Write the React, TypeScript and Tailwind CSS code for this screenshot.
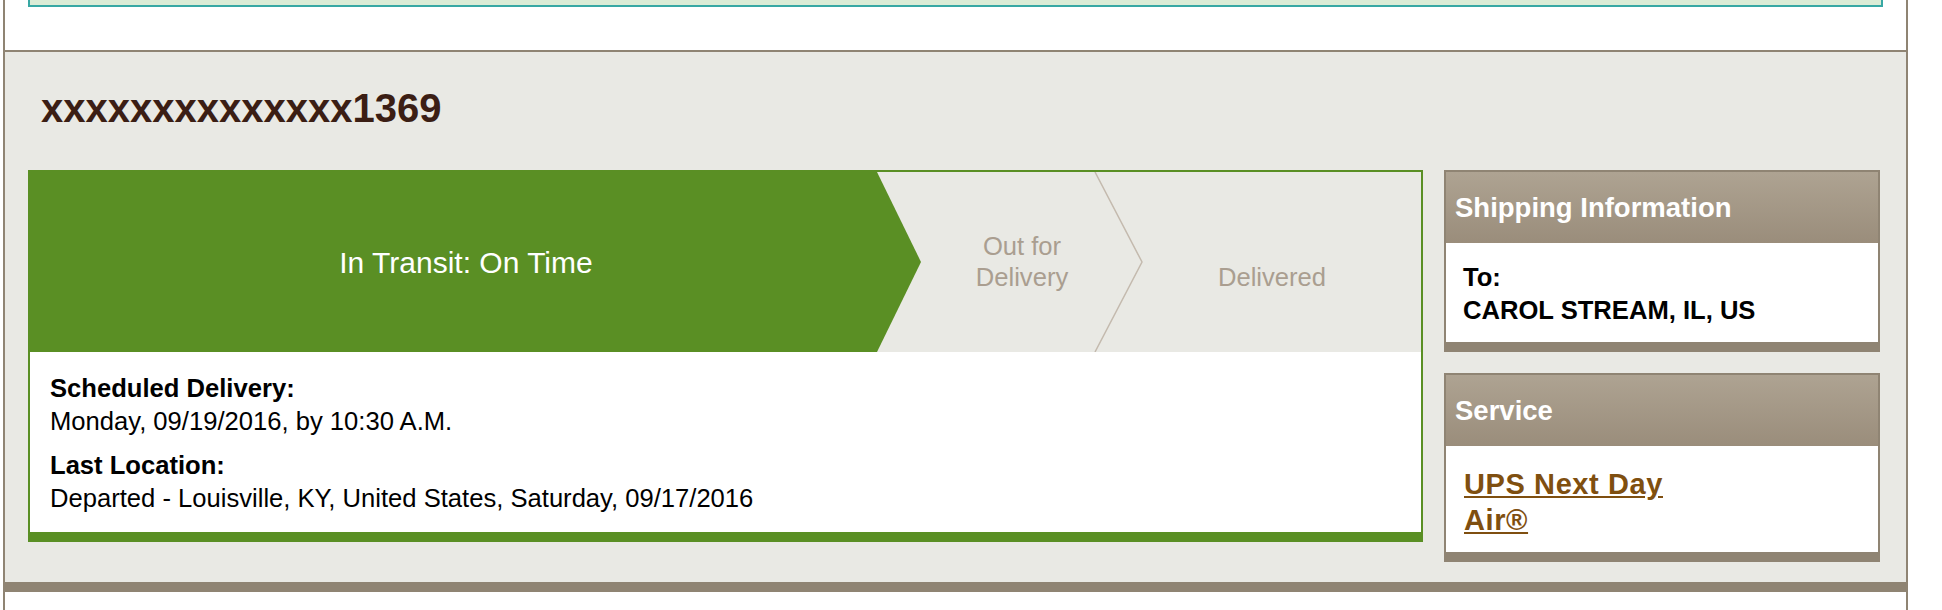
export default function App() {
  return (
    <div className="min-h-[610px] bg-white font-['Liberation_Sans',Arial,sans-serif]">
      <div className="mx-[3px] min-h-[610px] w-[1905px] border-x-2 border-[#8f8473]">
        {/* alert strip, mostly scrolled out of view */}
        <div className="h-[50px]">
          <div className="mx-[23px] h-[7px] border-x-2 border-b-2 border-[#38a8a4] bg-[#dbecd6]" />
        </div>

        <section className="border-t-2 border-b-[10px] border-[#8f8473] bg-[#e9e9e4] pb-[20px] pl-[23px] pr-[26px]">
          <h1 className="pl-[13px] pt-[36px] text-[40px] font-bold leading-none text-[#3b1e14]">
            xxxxxxxxxxxxxx1369
          </h1>

          <div className="mt-[42px] flex items-start gap-[21px]">
            {/* progress card */}
            <div className="w-[1395px] border-x-2 border-t-2 border-b-[10px] border-[#5a8f24] bg-white">
              <div className="relative flex h-[180px] bg-[#e9e9e4]">
                <svg className="absolute inset-0 h-full w-full" viewBox="0 0 1391 180" preserveAspectRatio="none">
                  <polygon points="0,0 847,0 891,90 847,180 0,180" fill="#5a8f24" />
                  <polyline points="1065,0 1112,90 1065,180" fill="none" stroke="#c4baae" strokeWidth="1.5" />
                </svg>
                <div className="relative flex w-[891px] items-center justify-center pr-[19px] text-[30px] text-white">
                  In Transit: On Time
                </div>
                <div className="relative flex w-[202px] items-center justify-center text-center text-[25.6px] leading-[31px] text-[#aa9e90]">
                  Out for
                  <br />
                  Delivery
                </div>
                <div className="relative flex flex-1 items-center justify-center pt-[31px] text-[25.6px] leading-[31px] text-[#aa9e90]">
                  Delivered
                </div>
              </div>

              <div className="h-[180px] pl-[20px] pt-[20px] text-[25.6px] leading-[33px] text-black">
                <div className="font-bold">Scheduled Delivery:</div>
                <div>Monday, 09/19/2016, by 10:30 A.M.</div>
                <div className="mt-[11px] font-bold">Last Location:</div>
                <div>Departed - Louisville, KY, United States, Saturday, 09/17/2016</div>
              </div>
            </div>

            {/* side panels */}
            <div className="flex w-[436px] flex-col gap-[21px]">
              <div className="border-x-2 border-t-2 border-b-[10px] border-[#8f8473] bg-white">
                <div className="flex h-[71px] items-center bg-gradient-to-b from-[#aea392] to-[#9a8d7b] pl-[9px] text-[27.5px] font-bold text-white">
                  Shipping Information
                </div>
                <div className="pb-[15px] pl-[17px] pt-[18px] text-[25.6px] font-bold leading-[33px] text-black">
                  <div>To:</div>
                  <div>CAROL STREAM, IL, US</div>
                </div>
              </div>

              <div className="border-x-2 border-t-2 border-b-[10px] border-[#8f8473] bg-white">
                <div className="flex h-[71px] items-center bg-gradient-to-b from-[#aea392] to-[#9a8d7b] pl-[9px] text-[27.5px] font-bold text-white">
                  Service
                </div>
                <div className="h-[106px] pl-[18px] pt-[20px]">
                  <a
                    href="#"
                    className="block w-[240px] text-[29px] font-bold leading-[36.4px] tracking-[0.6px] text-[#7f4f10] underline"
                  >
                    UPS Next Day Air®
                  </a>
                </div>
              </div>
            </div>
          </div>
        </section>
      </div>
    </div>
  );
}
